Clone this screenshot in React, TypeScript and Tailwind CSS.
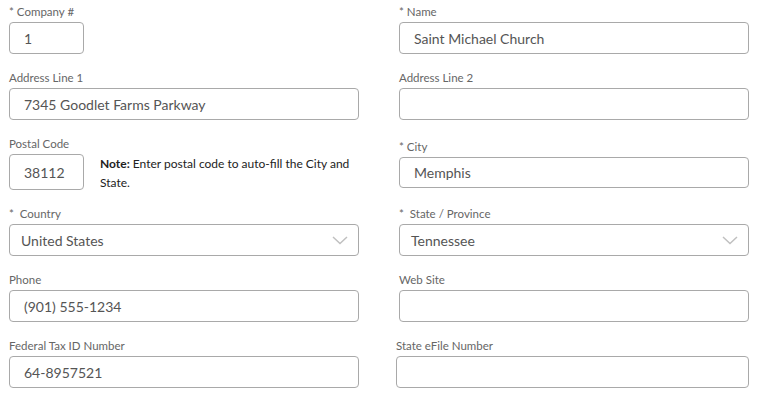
import React from "react";

const font = { fontFamily: "Lato, 'Open Sans', sans-serif" };

function Label({ children, className = "" }: { children: React.ReactNode; className?: string }) {
  return (
    <div className={"h-[16px] mb-[2px] text-[11.5px] leading-[16px] text-[#666] whitespace-nowrap " + className}>
      {children}
    </div>
  );
}

function Box({
  value,
  className = "",
  select = false,
}: {
  value?: string;
  className?: string;
  select?: boolean;
}) {
  return (
    <div
      className={
        "relative flex items-center border border-[#a9a9a9] rounded-[4px] bg-white text-[14px] text-[#555] " +
        (select ? "pl-[11px] pr-[10px] justify-between " : "pl-[14px] ") +
        className
      }
    >
      <span className="whitespace-nowrap">{value}</span>
      {select && (
        <svg width="16" height="9" viewBox="0 0 16 9" fill="none">
          <path d="M1 1l7 6.5L15 1" stroke="#c0c0c0" strokeWidth="1.5" />
        </svg>
      )}
    </div>
  );
}

export default function App() {
  return (
    <div className="w-[757px] h-[396px] bg-white overflow-hidden" style={font}>
      <div className="grid grid-cols-[350px_350px] gap-x-[40px] gap-y-[16px] pl-[9px] pt-[4px] items-start">
        {/* Row 1 */}
        <div>
          <Label>* Company #</Label>
          <Box value="1" className="w-[75px] h-[32px]" />
        </div>
        <div>
          <Label>* Name</Label>
          <Box value="Saint Michael Church" className="h-[32px]" />
        </div>

        {/* Row 2 */}
        <div>
          <Label>Address Line 1</Label>
          <Box value="7345 Goodlet Farms Parkway" className="h-[32px]" />
        </div>
        <div>
          <Label>Address Line 2</Label>
          <Box className="h-[32px]" />
        </div>

        {/* Row 3 */}
        <div>
          <Label>Postal Code</Label>
          <div className="flex items-start gap-[16px] h-[36px]">
            <Box value="38112" className="w-[75px] h-[36px] shrink-0" />
            <p className="text-[12px] leading-[19px] text-[#222] w-[260px] h-[36px]">
              <span className="font-bold">Note:</span> Enter postal code to auto-fill the City and State.
            </p>
          </div>
        </div>
        <div className="mt-[3px]">
          <Label>* City</Label>
          <Box value="Memphis" className="h-[31px]" />
        </div>

        {/* Row 4 */}
        <div>
          <Label>*&nbsp; Country</Label>
          <Box value="United States" select className="h-[32px]" />
        </div>
        <div>
          <Label>*&nbsp; State / Province</Label>
          <Box value="Tennessee" select className="h-[32px]" />
        </div>

        {/* Row 5 */}
        <div>
          <Label>Phone</Label>
          <Box value="(901) 555-1234" className="h-[32px]" />
        </div>
        <div>
          <Label>Web Site</Label>
          <Box className="h-[32px]" />
        </div>

        {/* Row 6 */}
        <div>
          <Label>Federal Tax ID Number</Label>
          <Box value="64-8957521" className="h-[32px]" />
        </div>
        <div className="-ml-[3px]">
          <Label>State eFile Number</Label>
          <Box className="h-[32px]" />
        </div>
      </div>
    </div>
  );
}
